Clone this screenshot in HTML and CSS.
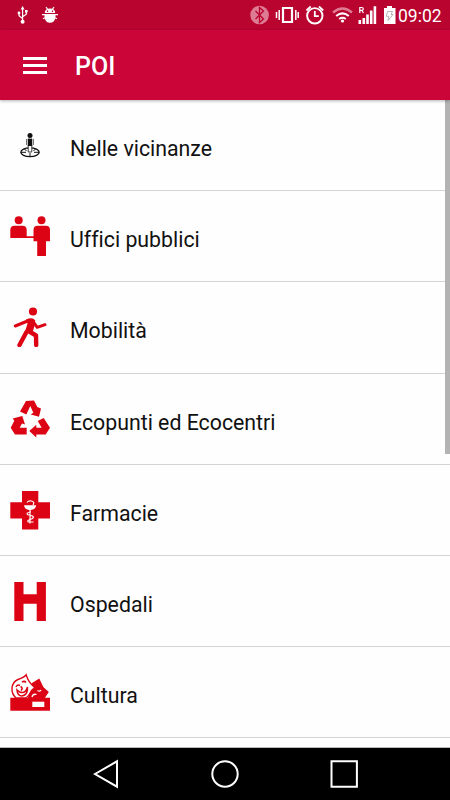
FILE: index.html
```html
<!DOCTYPE html>
<html lang="it">
<head>
    <meta charset="UTF-8">
    <title>POI</title>
    <link rel="stylesheet" href="styles.css">
</head>
<body>
    <div class="status">
        <svg class="status-left" width="70" height="30" viewBox="0 0 70 30" fill="none" stroke="#fff" stroke-width="1.2">
            <path d="M22.6 9v12M22.6 18.5l-3.6-2.7v-3M22.6 16.8l3.7-2.5v-2.8"/>
            <path d="M22.6 6l2 3.5h-4zM25 10h2.6v2.6H25z" fill="#fff" stroke="none"/>
            <circle cx="19" cy="13" r="1.4" fill="#fff" stroke="none"/>
            <circle cx="22.6" cy="21.8" r="2" fill="#fff" stroke="none"/>
            <path d="M44.8 13q0-4.5 5.2-4.500q5.200 0 5.200 4.500zM44.500 14.300h11v3q-1 5.500-5.500 5.500t-5.500-5.500z" fill="#fff" stroke="none"/>
            <path d="M46 7l1.500 2.200M54 7l-1.500 2.200M42 14.700h16M43 18.800l2-1M57 18.800l-2-1"/>
            <path d="M47.500 10.500v1.500M52.500 10.500v1.500" stroke="#b90430"/>
        </svg>
        <svg class="status-right" width="156" height="30" viewBox="246 0 156 30" fill="none" stroke="#fff" stroke-width="1.500">
            <circle cx="259.600" cy="15" r="9.300" fill="#dd7c92" stroke="none"/>
            <path d="M255.500 11l8 8-4 3.500v-15l4 3.500-8 8" stroke="#b90430" stroke-width="1.300"/>
            <path d="M283 8h9v14h-9z" stroke-width="2.200"/>
            <path d="M279.200 10v10M276.500 12v6M295.800 10v10M298.200 12v6"/>
            <circle cx="314.800" cy="15.800" r="7.700" stroke-width="1.900"/>
            <path d="M314.800 11v5.200h4M306.500 10.500l4.200-4M323.200 10.500l-4.200-4" stroke-width="1.800"/>
            <path d="M333 12.500q9.500-8 19 0" stroke="#dd7c92" stroke-width="2.300"/>
            <path d="M336.200 16q6.300-5.300 12.600 0M339.200 19q3.300-2.500 6.600 0" stroke-width="2"/>
            <circle cx="342.500" cy="21" r="1.600" fill="#fff" stroke="none"/>
            <path d="M359.800 13V7.500h2q1.500 0 1.500 1.400t-1.500 1.400h-2M361.800 10.500l1.700 2.500" stroke-width="1.200"/>
            <path d="M358.500 20h2.600v4h-2.600zM362.500 18h2.600v6h-2.600zM366.200 14.500h2.600v9.500h-2.600zM369.900 10.500h2.600v13.500h-2.600zM373.600 6.200h2.600v17.800h-2.600z" fill="#fff" stroke="none"/>
            <path d="M384 8h3V6h5v2h3.500v16H384z" fill="#fff" stroke="none"/>
            <path d="M387.500 11.500h5l-1.500 3h2l-5 6 .8-4.200h-2.500z" stroke="#a9a0a3" stroke-width=".8"/>
        </svg>
        <span class="clock">09:02</span>
    </div>
    <div class="header">
        <div class="menu"><span></span><span></span><span></span></div>
        <h1>POI</h1>
    </div>
    <div class="list">
        <div class="row">
            <svg width="40" height="40" viewBox="0 0 40 40" fill="#111">
                <ellipse cx="20" cy="27.300" rx="9.200" ry="4.400" fill="none" stroke="#111" stroke-width="1.300"/>
                <path d="M11 27.300h5M24 27.300h5M20 28v3.500M14.500 24.500l2 1M25.500 24.500l-2 1" stroke="#111"/>
                <path d="M18.200 20h3.600v7h-3.600z" fill="#fff" stroke="#111" stroke-width=".8"/>
                <circle cx="20" cy="10.500" r="2.500"/>
                <path d="M17.800 13.600h4.400v7.400h-4.400z"/>
                <path d="M16.600 14v6M23.400 14v6" stroke="#555" stroke-width=".9"/>
            </svg>
            <span>Nelle vicinanze</span>
        </div>
        <div class="row">
            <svg width="40" height="40" viewBox="0 0 40 40">
                <circle cx="8.700" cy="4.300" r="4"/>
                <circle cx="31.500" cy="4.300" r="4"/>
                <path d="M.3 22v-8q0-4.300 4.300-4.300h7.800q4.300 0 4.300 4.300v6.300h6.800V14q0-4.300 4.200-4.300h8.100q4.200 0 4.200 4.300v11.300h-4V40h-8.800V25.300h-3.700V22z"/>
            </svg>
            <span>Uffici pubblici</span>
        </div>
        <div class="row">
            <svg width="40" height="40" viewBox="0 0 40 40">
                <circle cx="23" cy="4.500" r="4.100"/>
                <path d="M16 12.500q6.500-3 9.300 1l-1 6-1.800 6-8 1 3-10z"/>
                <path d="M5.300 19l13.500-5.500" fill="none" stroke="#dc0414" stroke-width="3" stroke-linecap="round"/>
                <path d="M23.500 15l3.700 5.300 7.800-2.600" fill="none" stroke="#dc0414" stroke-width="3" stroke-linecap="round" stroke-linejoin="round"/>
                <path d="M16.500 25l-7 13M18.500 24l7.500 4.500.2 9.500" fill="none" stroke="#dc0414" stroke-width="4.400" stroke-linecap="round" stroke-linejoin="round"/>
            </svg>
            <span>Mobilità</span>
        </div>
        <div class="row">
            <svg width="40" height="40" viewBox="0 0 40 40">
                <path d="M10 12.400L16 2l8-.6L27.300 8l3.700 1.400-2 8.300-8.300-2.300 2.600-1.700-3-6.700-4 8.400z"/>
                <path d="M2.700 19.400l9.600-2.400 2.700 8.400-3-1-2.300 4.300h7v6.700H5L.7 28.700l3.600-7z"/>
                <path d="M27.700 22l6-3 6.300 9.700-4.300 6.700h-9.400v3l-7-6.400 7-6.300v3h5.400z"/>
            </svg>
            <span>Ecopunti ed Ecocentri</span>
        </div>
        <div class="row">
            <svg width="40" height="40" viewBox="0 0 40 40">
                <path d="M12 .9h16.300v11.300H40v16.300H28.300v11H12v-11H.3V12.200H12z"/>
                <path d="M14 15.300h12.200q-.5 4.200-5.200 4.600h-2q-4.500-.4-5-4.600z" fill="#fff"/>
                <path d="M17 12.500q1.500-2.200 4.500-1.500 3.500.8 1.500 4M20 19.500v14M21 22q-5 .5-3.500 2.500l5 1.500q2.500 2-2.500 3.500-3.500 1.500-1.500 2.500h5" fill="none" stroke="#fff" stroke-width="1.200"/>
            </svg>
            <span>Farmacie</span>
        </div>
        <div class="row">
            <svg width="40" height="40" viewBox="0 0 40 40">
                <path d="M4.300 1h9.200v12.200h13.200V1h9.200v39h-9.200V22.700H13.500V40H4.300z"/>
            </svg>
            <span>Ospedali</span>
        </div>
        <div class="row">
            <svg width="40" height="40" viewBox="0 0 40 40">
                <path d="M.3 25.700H40v13H.3z"/>
                <path d="M22.300 29.700h12V35h-12z" fill="#fff"/>
                <path d="M22 11l7.300-4.500 4 8.500 5.500 5-4 6H18z"/>
                <path d="M2 16Q2.500 10 8 7.500q6-2 8.200-4.700 1.800 7 8.500 12.700-3.500 2.500-5.200 6.500-2 4-5.500 4H6Q1.500 22 2 16z" fill="#fff" stroke="#dc0414" stroke-width="1.400"/>
                <path d="M6 15q1.500-3 4-1.500M12 10q2.500-1.500 4 .5M10.500 14.500q3 1.500.5 4M7 18q.5 6 5 6 6-1 5.500-9-1.500 5-4.500 5.500-3 .5-6-2.500z" fill="none" stroke="#dc0414" stroke-width="1.500"/>
                <path d="M22 25q1-3.500 4.500-2.500M27.500 18.500q2.500 1.500 3.500-.5" fill="none" stroke="#fff" stroke-width="1.300"/>
            </svg>
            <span>Cultura</span>
        </div>
        <div class="row"></div>
        <div class="scrollbar"></div>
    </div>
    <div class="navbar">
        <svg width="450" height="52" viewBox="0 0 450 52" fill="none" stroke="#fff" stroke-width="2">
            <path d="M95 26l22-12.700v25.400z"/>
            <circle cx="225" cy="26" r="12.700"/>
            <path d="M331.500 13.300h25.400v25.400h-25.400z"/>
        </svg>
    </div>
</body>
</html>
```

FILE: styles.css
```css
* { box-sizing: border-box; }
body { margin: 0; width: 450px; height: 800px; overflow: hidden; display: flex; flex-direction: column; background: #fefefe; font-family: Roboto, sans-serif; }
svg { display: block; flex: none; }
.status { height: 30px; flex: none; display: flex; align-items: center; background: #b90430; color: #fff; }
.status-right { margin-left: auto; }
.clock { width: 48px; font-size: 17.5px; line-height: 30px; padding-top: 2px; margin-left: -4px; margin-right: 4px; white-space: nowrap; }
.header { height: 70px; flex: none; display: flex; align-items: center; padding-left: 23px; background: #cb0538; color: #fff; position: relative; z-index: 1; box-shadow: 0 1px 3px rgba(0,0,0,0.3); }
.menu { width: 24px; display: flex; flex-direction: column; gap: 4px; }
.menu span { height: 3px; background: #fff; }
.header h1 { margin: 2px 0 0 28px; font-size: 25px; font-weight: 500; }
.list { flex: 1; overflow: hidden; position: relative; border-bottom: 1px solid #bbb; }
.row { height: 91.2px; display: flex; align-items: center; padding-left: 10px; border-bottom: 1px solid #d4d4d4; fill: #dc0414; }
.row span { margin-left: 20px; padding-top: 7px; font-size: 21.3px; color: #111; white-space: nowrap; font-variant-ligatures: none; }
.scrollbar { position: absolute; top: 0; right: 0; width: 5px; height: 354px; background: #b3b3b3; }
.navbar { height: 52px; flex: none; background: #000; }
```
